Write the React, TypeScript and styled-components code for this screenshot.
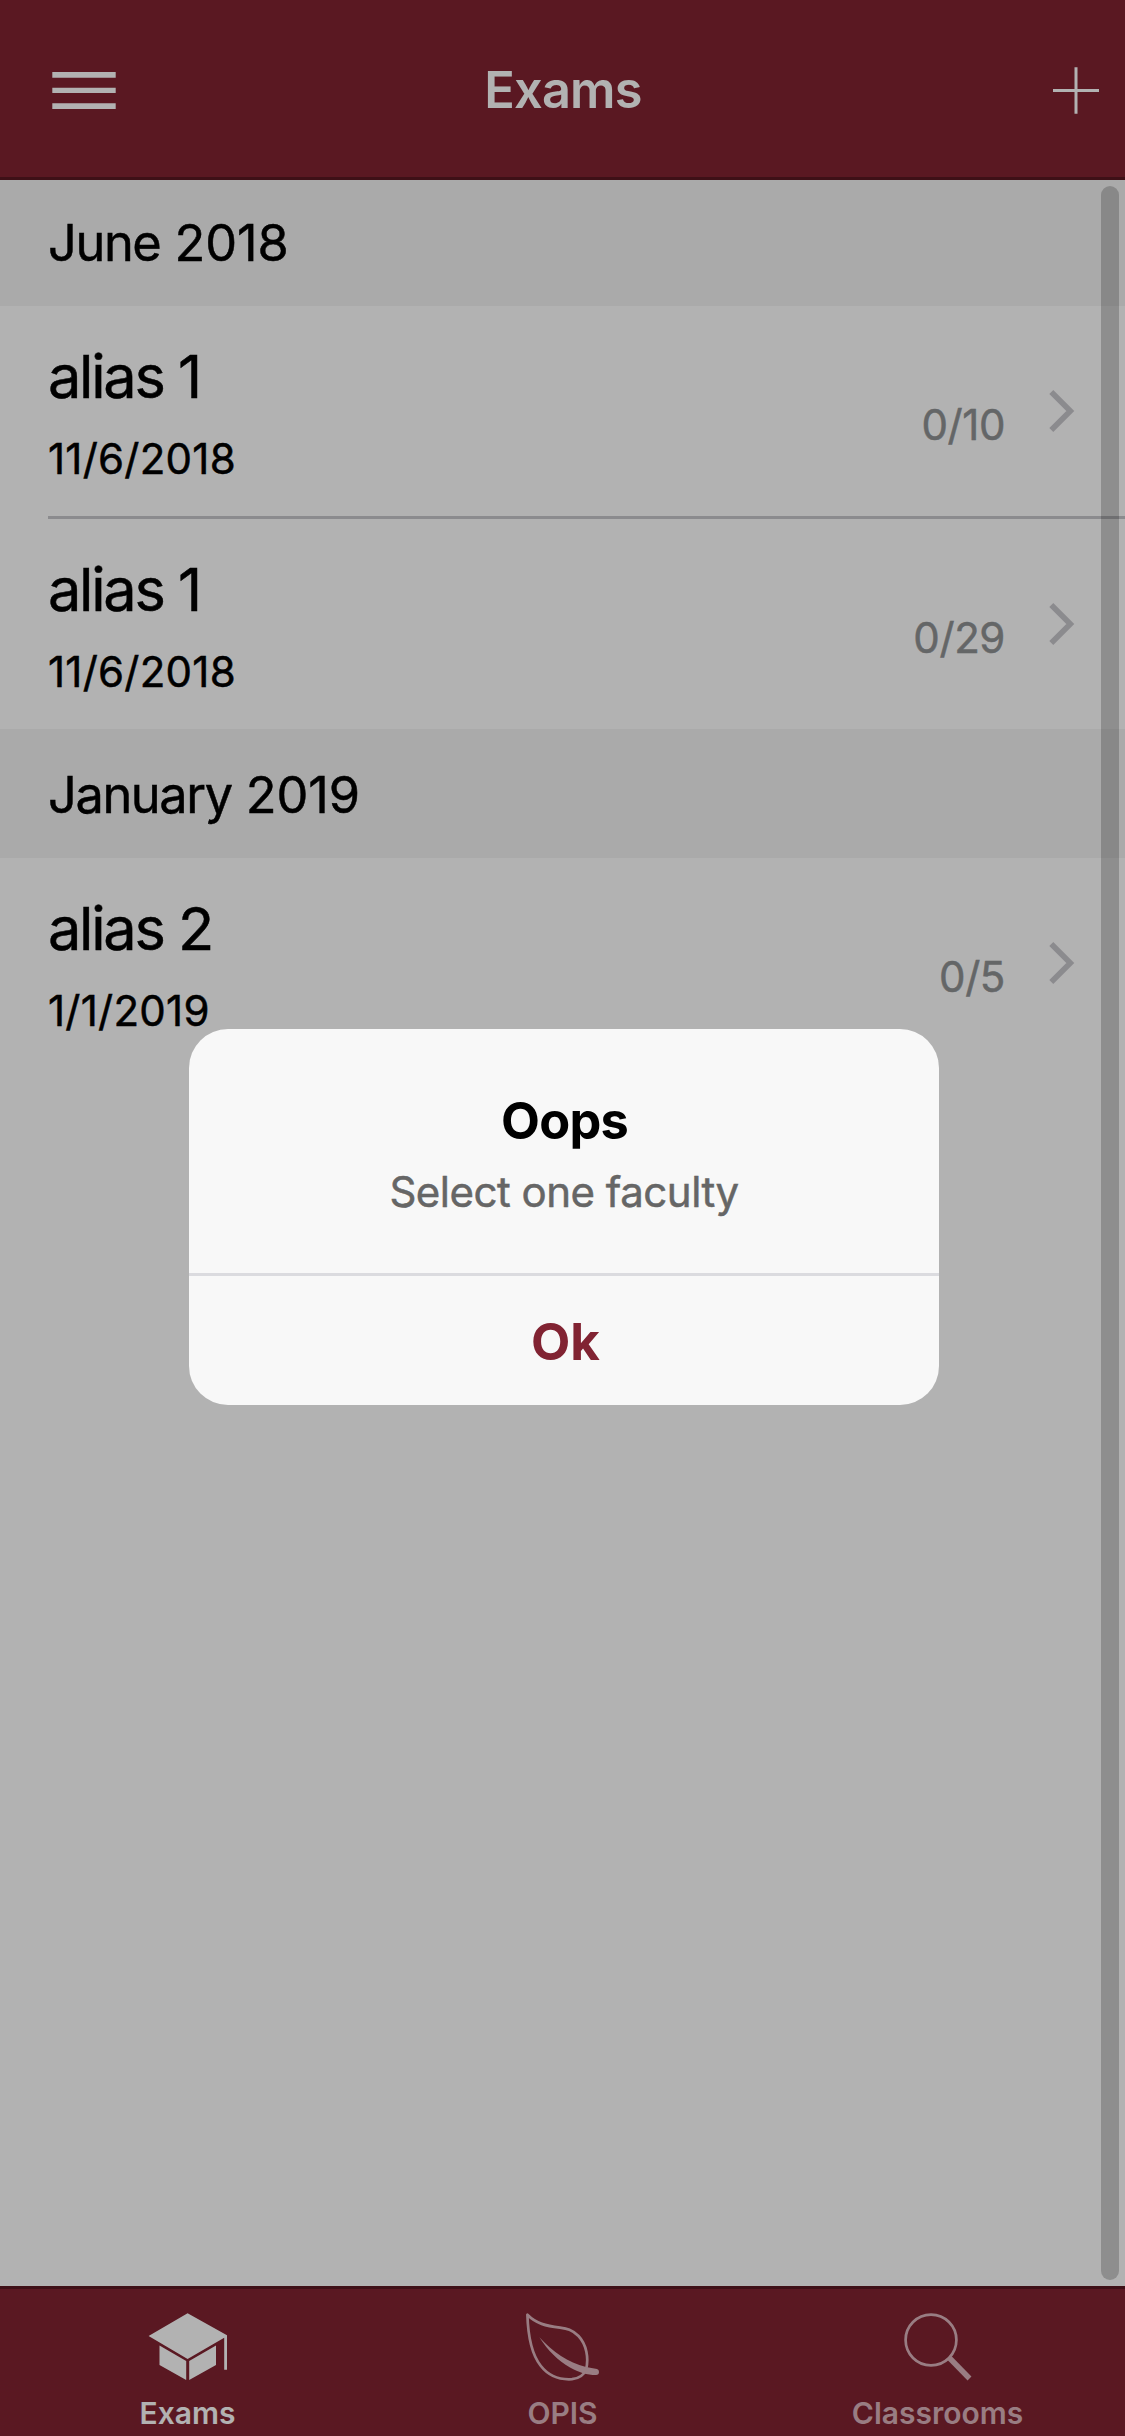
import React from "react";
import styled, { createGlobalStyle } from "styled-components";

const GlobalStyle = createGlobalStyle`
  *, *::before, *::after { box-sizing: border-box; }
  html, body { margin: 0; padding: 0; }
  body {
    font-family: Inter, "Liberation Sans", sans-serif;
    font-weight: 400;
    color: #000;
    background: #fff;
    overflow: hidden;
  }
  button { font: inherit; border: 0; padding: 0; background: none; color: inherit; }
  h1, h2, h3, p { margin: 0; font-weight: inherit; }
`;

const Screen = styled.div`
  position: relative;
  display: flex;
  flex-direction: column;
  width: 1125px;
  height: 2436px;
  background: #fff;
`;

const Header = styled.header`
  display: grid;
  grid-template-columns: 1fr auto 1fr;
  align-items: center;
  height: 180px;
  padding: 0 26px 0 52px;
  background: #812331;
  border-bottom: 3px solid #5a1722;
  color: #fff;
`;

const HeaderTitle = styled.h1`
  padding-top: 3px;
  margin-left: -25px;
  font-size: 50.5px;
  line-height: 60px;
  font-weight: 600;
  letter-spacing: -0.8px;
`;

const IconButton = styled.button<{ $end?: boolean }>`
  display: flex;
  justify-self: ${(p) => (p.$end ? "end" : "start")};
  padding-top: 4px;
`;

const Content = styled.main`
  position: relative;
  flex: 1;
  -webkit-text-stroke: 0.5px currentColor;
`;

const SectionHeader = styled.h2<{ $divided?: boolean }>`
  padding: ${(p) => (p.$divided ? 3 : 0)}px 48px 0;
  height: ${(p) => (p.$divided ? 129 : 126)}px;
  background: #f4f4f4;
  font-size: 50.5px;
  line-height: 126px;
  letter-spacing: -0.1px;
`;

const Month = styled.span`
  letter-spacing: -1.4px;
`;

const Row = styled.div<{ $divided?: boolean }>`
  display: flex;
  align-items: center;
  height: ${(p) => (p.$divided ? 213 : 210)}px;
  margin-left: 48px;
  padding-right: 50px;
  border-bottom: ${(p) => (p.$divided ? "3px solid #c8c7cc" : "0")};
`;

const RowText = styled.div`
  flex: 1;
  align-self: flex-start;
  padding-top: 34px;
`;

const RowTitle = styled.h3`
  font-size: 59.5px;
  line-height: 73px;
  letter-spacing: -2.3px;
`;

const RowDate = styled.p`
  margin-top: 16px;
  font-size: 42px;
  line-height: 60px;
  letter-spacing: 0.25px;
`;

const Count = styled.span`
  padding-top: 27px;
  margin-right: 44px;
  font-size: 42px;
  line-height: 60px;
  letter-spacing: -0.4px;
  color: #909294;
`;

const ScrollThumb = styled.div`
  position: absolute;
  top: 6px;
  right: 6px;
  bottom: 6px;
  width: 18px;
  border-radius: 9px;
  background: rgba(0, 0, 0, 0.2);
`;

const TabBar = styled.nav`
  display: grid;
  grid-template-columns: repeat(3, 1fr);
  height: 150px;
  background: #812331;
  border-top: 3px solid #5a1722;
`;

const Tab = styled.button<{ $active?: boolean }>`
  display: flex;
  flex-direction: column;
  align-items: center;
  padding-top: 18px;
  color: ${(p) => (p.$active ? "#fff" : "#dcb4bc")};
`;

const TabLabel = styled.span`
  margin-top: 12px;
  font-size: 30px;
  line-height: 40px;
  font-weight: 600;
`;

const Backdrop = styled.div`
  position: absolute;
  inset: 0;
  display: flex;
  align-items: center;
  justify-content: center;
  padding: 0 0 2px 3px;
  background: rgba(0, 0, 0, 0.3);
`;

const Dialog = styled.div`
  width: 750px;
  height: 376px;
  border-radius: 39px;
  overflow: hidden;
  background: #f8f8f8;
  text-align: center;
`;

const DialogBody = styled.div`
  height: 247px;
  padding-top: 61px;
  border-bottom: 3px solid #dbdbdf;
`;

const DialogTitle = styled.h2`
  padding-left: 1px;
  font-size: 50.5px;
  line-height: 61px;
  font-weight: 700;
  letter-spacing: -0.8px;
`;

const DialogText = styled.p`
  margin-top: 11px;
  font-size: 42px;
  line-height: 60px;
  letter-spacing: -0.5px;
  color: #666;
  -webkit-text-stroke: 0.5px currentColor;
`;

const DialogButton = styled.button`
  width: 100%;
  height: 129px;
  padding: 2px 0 0 3px;
  font-size: 51px;
  line-height: 127px;
  font-weight: 700;
  color: #812332;
`;

const MenuIcon = () => (
  <svg width="64" height="38" viewBox="0 0 64 38" fill="currentColor">
    <path d="M.3 0h63.4v5.7H.3zM.3 15.8h63.4v5.3H.3zM.3 31.2h63.4V37H.3z" />
  </svg>
);

const PlusIcon = () => (
  <svg width="46" height="47" viewBox="0 0 46 47" stroke="currentColor" strokeWidth="3">
    <path d="M0 23.5h46M23 .3v46.4" />
  </svg>
);

const Chevron = () => (
  <svg width="26" height="42" viewBox="0 0 26 42" fill="none" stroke="#c8c7cc" strokeWidth="5.6">
    <path d="M2.3 2 L21.3 21 L2.3 40" />
  </svg>
);

const CapIcon = () => (
  <svg width="80" height="74" viewBox="0 0 80 74" fill="currentColor">
    <path d="M.6 29 39.6 6.2 79 28.3V62.7H76.2V30.8L39.6 52zM11.5 38.5 38.2 54V73L11.5 58zM41.2 54 68 38.5V58L41.2 73z" />
  </svg>
);

const LeafIcon = () => (
  <svg width="80" height="74" viewBox="43 37 80 74" fill="none">
    <path
      d="M47.4 44.8C48 66 51.5 84 60.5 95.5C68.5 106 79 110 92 109.2C99 108.5 103.5 105.5 106 100C109 88 106.5 74.5 98.5 66C92 59.5 87 58.6 80 57.7C66 56 56 53.5 47.4 44.8Z"
      stroke="currentColor"
      strokeWidth="2.7"
      strokeLinejoin="round"
    />
    <path
      d="M59.3 67.3C73 82 88 92.5 106 97L117 99Q119 99.5 119 102Q119 105 116 105C107 105 99 102.5 90 97.5C78 91 68 80.5 59.3 67.3Z"
      fill="currentColor"
    />
  </svg>
);

const SearchIcon = () => (
  <svg width="80" height="74" viewBox="67.5 57 80 74" fill="none" stroke="currentColor">
    <circle cx="100.5" cy="90" r="25.4" strokeWidth="2.7" />
    <path d="M118.5 107.5 139 128.5" strokeWidth="5.4" />
  </svg>
);

type Exam = { title: string; date: string; count: string };

const sections: { month: string; year: number; exams: Exam[] }[] = [
  {
    month: "June",
    year: 2018,
    exams: [
      { title: "alias 1", date: "11/6/2018", count: "0/10" },
      { title: "alias 1", date: "11/6/2018", count: "0/29" },
    ],
  },
  {
    month: "January",
    year: 2019,
    exams: [{ title: "alias 2", date: "1/1/2019", count: "0/5" }],
  },
];

export default function App() {
  return (
    <>
      <GlobalStyle />
      <Screen>
        <Header>
          <IconButton aria-label="Menu">
            <MenuIcon />
          </IconButton>
          <HeaderTitle>Exams</HeaderTitle>
          <IconButton $end aria-label="Add">
            <PlusIcon />
          </IconButton>
        </Header>
        <Content>
          {sections.map((section, s) => (
            <section key={section.month}>
              <SectionHeader $divided={s > 0}>
                <Month>{section.month}</Month> {section.year}
              </SectionHeader>
              {section.exams.map((exam, i) => (
                <Row key={i} $divided={i < section.exams.length - 1}>
                  <RowText>
                    <RowTitle>{exam.title}</RowTitle>
                    <RowDate>{exam.date}</RowDate>
                  </RowText>
                  <Count>{exam.count}</Count>
                  <Chevron />
                </Row>
              ))}
            </section>
          ))}
          <ScrollThumb />
        </Content>
        <TabBar>
          <Tab $active>
            <CapIcon />
            <TabLabel>Exams</TabLabel>
          </Tab>
          <Tab>
            <LeafIcon />
            <TabLabel>OPIS</TabLabel>
          </Tab>
          <Tab>
            <SearchIcon />
            <TabLabel>Classrooms</TabLabel>
          </Tab>
        </TabBar>
        <Backdrop>
          <Dialog role="alertdialog">
            <DialogBody>
              <DialogTitle>Oops</DialogTitle>
              <DialogText>Select one faculty</DialogText>
            </DialogBody>
            <DialogButton>Ok</DialogButton>
          </Dialog>
        </Backdrop>
      </Screen>
    </>
  );
}
